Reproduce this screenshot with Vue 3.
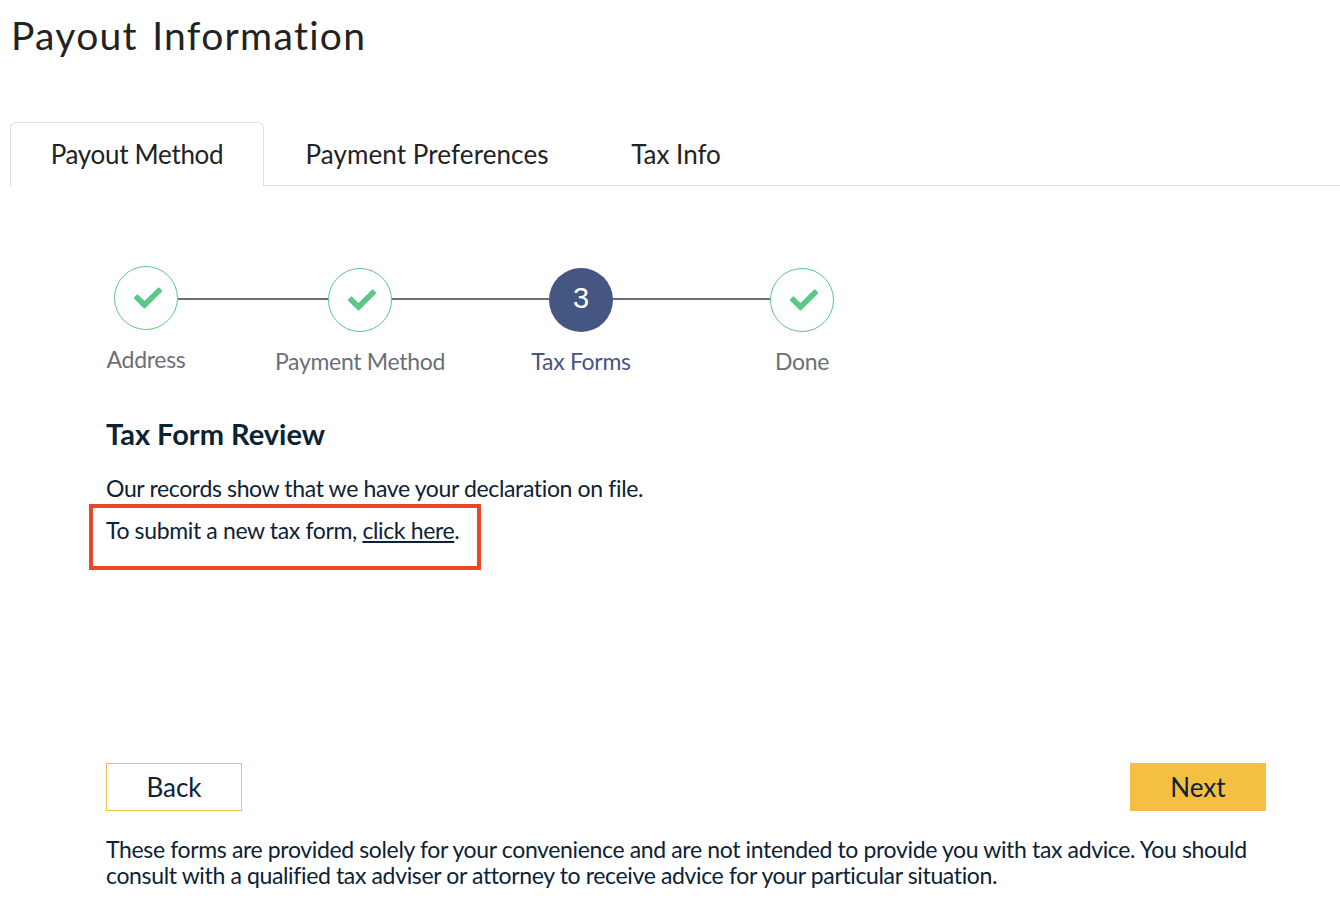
<script setup>
const steps = [
  { label: 'Address', state: 'done', first: true },
  { label: 'Payment Method', state: 'done', gap: 'g1' },
  { label: 'Tax Forms', state: 'current', gap: 'g2' },
  { label: 'Done', state: 'done', gap: 'g2' }
]
const tabs = ['Payout Method', 'Payment Preferences', 'Tax Info']
</script>

<template>
  <div class="page">
    <h1 class="title">Payout Information</h1>
    <nav class="tabs">
      <a v-for="(t, i) in tabs" :key="t" class="tab" :class="[`tab${i}`, { active: i === 0 }]">{{ t }}</a>
    </nav>
    <main class="content">
      <div class="stepper">
        <template v-for="s in steps" :key="s.label">
          <div v-if="s.gap" class="line" :class="s.gap"></div>
          <div class="step" :class="[s.state, { first: s.first }]">
            <div class="circle">
              <svg v-if="s.state === 'done'" class="check" viewBox="0 0 512 512">
                <path d="M173.898 439.404l-166.4-166.4c-9.997-9.997-9.997-26.206 0-36.204l36.203-36.204c9.997-9.998 26.207-9.998 36.204 0L192 312.69 432.095 72.596c9.997-9.997 26.207-9.997 36.204 0l36.203 36.204c9.997 9.997 9.997 26.206 0 36.204l-294.4 294.401c-9.998 9.997-26.207 9.997-36.204-.001z" />
              </svg>
              <span v-else class="num">3</span>
            </div>
            <div class="label">{{ s.label }}</div>
          </div>
        </template>
      </div>
      <h2 class="heading">Tax Form Review</h2>
      <p class="para">Our records show that we have your declaration on file.</p>
      <p class="para second">To submit a new tax form, <a class="link">click here</a>.<span class="highlight"></span></p>
      <div class="actions">
        <button class="btn back">Back</button>
        <button class="btn next">Next</button>
      </div>
      <p class="note">These forms are provided solely for your convenience and are not intended to provide you with tax advice. You should consult with a qualified tax adviser or attorney to receive advice for your particular situation.</p>
    </main>
  </div>
</template>

<style>
html, body { background: #fff; }
</style>

<style scoped>
.page {
  width: 1340px;
  height: 912px;
  overflow: hidden;
  font-family: Lato, sans-serif;
  color: #0c2236;
  background: #fff;
}
.title {
  margin: 0;
  padding: 11px 0 0 11px;
  height: 122px;
  box-sizing: border-box;
  font-size: 39px;
  line-height: 48px;
  font-weight: 400;
  letter-spacing: 1.3px;
  word-spacing: 3px;
  color: #222;
}
.tabs {
  display: flex;
  height: 64px;
  box-sizing: border-box;
  margin-left: 10px;
  border-bottom: 1px solid #dedede;
}
.tab {
  display: flex;
  align-items: center;
  justify-content: center;
  height: 64px;
  box-sizing: border-box;
  font-size: 26px;
  color: #222;
  white-space: nowrap;
}
.tab0 { width: 254px; letter-spacing: -0.3px; }
.tab1 { width: 326px; letter-spacing: 0.1px; }
.tab2 { width: 172px; }
.tab.active {
  background: #fff;
  border: 1px solid #dedede;
  border-bottom: 0;
  border-radius: 6px 6px 0 0;
  padding-bottom: 2px;
}
.content {
  padding: 82px 74px 0 106px;
}
.stepper {
  display: flex;
  align-items: flex-start;
  margin-left: 8px;
  height: 148px;
}
.step {
  display: flex;
  flex-direction: column;
  align-items: center;
  width: 64px;
}
.step.first { margin-top: -2px; }
.circle {
  display: flex;
  align-items: center;
  justify-content: center;
  flex: none;
  width: 64px;
  height: 64px;
  box-sizing: border-box;
  border-radius: 50%;
}
.done .circle { border: 1px solid #5cc888; }
.current .circle { background: #465682; }
.check { width: 28px; height: 28px; fill: #5cc888; margin-left: 3px; }
.num {
  font-family: "Liberation Sans", sans-serif;
  font-size: 29px;
  color: #fff;
  margin-top: -4px;
}
.label {
  margin-top: 15px;
  font-size: 23px;
  letter-spacing: -0.3px;
  line-height: 28px;
  color: #6c6f75;
  white-space: nowrap;
}
.current .label { color: #465682; }
.line {
  flex: none;
  height: 2px;
  margin-top: 30px;
  background: #6c7074;
}
.g1 { width: 150px; }
.g2 { width: 157px; }
.heading {
  margin: 0;
  font-size: 29px;
  line-height: 36px;
  font-weight: 700;
}
.para {
  margin: 21px 0 0;
  font-size: 23px;
  letter-spacing: -0.36px;
  line-height: 30px;
}
.second {
  position: relative;
  margin-top: 12px;
}
.link { text-decoration: underline; }
.highlight {
  position: absolute;
  left: -17px;
  top: -11px;
  width: 392px;
  height: 66px;
  box-sizing: border-box;
  border: 4px solid #ea4628;
  pointer-events: none;
}
.actions {
  display: flex;
  justify-content: space-between;
  margin-top: 218px;
}
.btn {
  width: 136px;
  height: 48px;
  box-sizing: border-box;
  font-family: Lato, sans-serif;
  font-size: 26px;
  color: #0c2236;
  padding: 0;
  border: 1px solid #f4bf42;
  border-radius: 0;
}
.back { background: #fff; }
.next { background: #f4bf42; }
.note {
  margin: 25px 0 0;
  font-size: 23px;
  letter-spacing: -0.36px;
  line-height: 26px;
}
</style>
